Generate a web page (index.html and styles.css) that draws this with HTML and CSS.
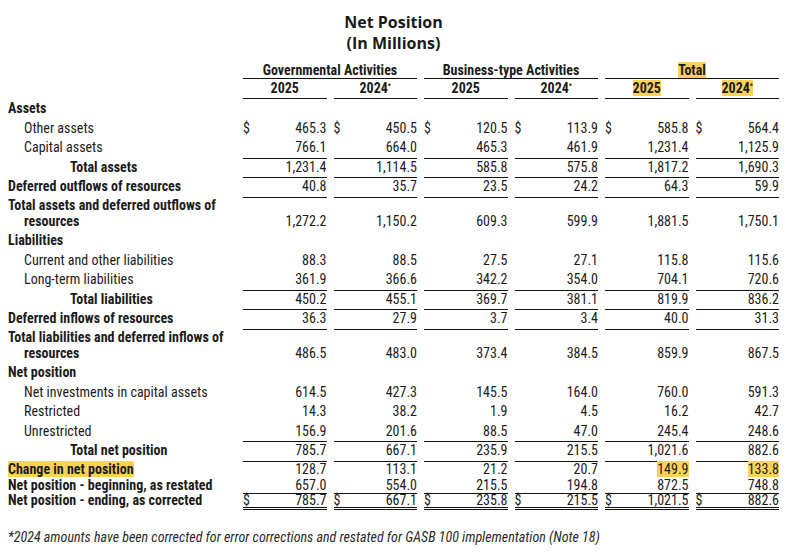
FILE: index.html
```html
<!DOCTYPE html>
<html>
<head>
<meta charset="utf-8">
<link rel="stylesheet" href="styles.css">
</head>
<body>
<div class="page">
  <h1 class="title">Net Position<br>(In Millions)</h1>
  <div class="table">
    <div class="row grp">
      <div class="lab"></div>
      <div class="gh">Governmental Activities</div>
      <div class="gh">Business-type Activities</div>
      <div class="gh"><mark>Total</mark></div>
    </div>
    <div class="row yr">
      <div class="lab"></div>
      <div class="yh">2025</div>
      <div class="yh">2024<sup>*</sup></div>
      <div class="yh">2025</div>
      <div class="yh">2024<sup>*</sup></div>
      <div class="yh"><mark>2025</mark></div>
      <div class="yh"><mark>2024<sup>*</sup></mark></div>
    </div>

    <div class="row"><div class="lab b">Assets</div></div>
    <div class="row">
      <div class="lab i1">Other assets</div>
      <div class="v d"><span>$</span><span>465.3</span></div>
      <div class="v d"><span>$</span><span>450.5</span></div>
      <div class="v d"><span>$</span><span>120.5</span></div>
      <div class="v d"><span>$</span><span>113.9</span></div>
      <div class="v d"><span>$</span><span>585.8</span></div>
      <div class="v d"><span>$</span><span>564.4</span></div>
    </div>
    <div class="row">
      <div class="lab i1">Capital assets</div>
      <div class="v u">766.1</div><div class="v u">664.0</div><div class="v u">465.3</div><div class="v u">461.9</div><div class="v u">1,231.4</div><div class="v u">1,125.9</div>
    </div>
    <div class="row">
      <div class="lab i2 b">Total assets</div>
      <div class="v u">1,231.4</div><div class="v u">1,114.5</div><div class="v u">585.8</div><div class="v u">575.8</div><div class="v u">1,817.2</div><div class="v u">1,690.3</div>
    </div>
    <div class="row">
      <div class="lab b">Deferred outflows of resources</div>
      <div class="v u">40.8</div><div class="v u">35.7</div><div class="v u">23.5</div><div class="v u">24.2</div><div class="v u">64.3</div><div class="v u">59.9</div>
    </div>
    <div class="row two">
      <div class="lab b hang">Total assets and deferred outflows of<br>resources</div>
      <div class="v">1,272.2</div><div class="v">1,150.2</div><div class="v">609.3</div><div class="v">599.9</div><div class="v">1,881.5</div><div class="v">1,750.1</div>
    </div>

    <div class="row"><div class="lab b">Liabilities</div></div>
    <div class="row">
      <div class="lab i1">Current and other liabilities</div>
      <div class="v">88.3</div><div class="v">88.5</div><div class="v">27.5</div><div class="v">27.1</div><div class="v">115.8</div><div class="v">115.6</div>
    </div>
    <div class="row">
      <div class="lab i1">Long-term liabilities</div>
      <div class="v u">361.9</div><div class="v u">366.6</div><div class="v u">342.2</div><div class="v u">354.0</div><div class="v u">704.1</div><div class="v u">720.6</div>
    </div>
    <div class="row">
      <div class="lab i2 b">Total liabilities</div>
      <div class="v u">450.2</div><div class="v u">455.1</div><div class="v u">369.7</div><div class="v u">381.1</div><div class="v u">819.9</div><div class="v u">836.2</div>
    </div>
    <div class="row">
      <div class="lab b">Deferred inflows of resources</div>
      <div class="v u">36.3</div><div class="v u">27.9</div><div class="v u">3.7</div><div class="v u">3.4</div><div class="v u">40.0</div><div class="v u">31.3</div>
    </div>
    <div class="row two">
      <div class="lab b hang">Total liabilities and deferred inflows of<br>resources</div>
      <div class="v">486.5</div><div class="v">483.0</div><div class="v">373.4</div><div class="v">384.5</div><div class="v">859.9</div><div class="v">867.5</div>
    </div>

    <div class="row"><div class="lab b">Net position</div></div>
    <div class="row">
      <div class="lab i1">Net investments in capital assets</div>
      <div class="v">614.5</div><div class="v">427.3</div><div class="v">145.5</div><div class="v">164.0</div><div class="v">760.0</div><div class="v">591.3</div>
    </div>
    <div class="row">
      <div class="lab i1">Restricted</div>
      <div class="v">14.3</div><div class="v">38.2</div><div class="v">1.9</div><div class="v">4.5</div><div class="v">16.2</div><div class="v">42.7</div>
    </div>
    <div class="row">
      <div class="lab i1">Unrestricted</div>
      <div class="v u">156.9</div><div class="v u">201.6</div><div class="v u">88.5</div><div class="v u">47.0</div><div class="v u">245.4</div><div class="v u">248.6</div>
    </div>
    <div class="row">
      <div class="lab i2 b">Total net position</div>
      <div class="v u">785.7</div><div class="v u">667.1</div><div class="v u">235.9</div><div class="v u">215.5</div><div class="v u">1,021.6</div><div class="v u">882.6</div>
    </div>
    <div class="row tight">
      <div class="lab b"><mark>Change in net position</mark></div>
      <div class="v">128.7</div><div class="v">113.1</div><div class="v">21.2</div><div class="v">20.7</div><div class="v"><mark>149.9</mark></div><div class="v"><mark>133.8</mark></div>
    </div>
    <div class="row tight">
      <div class="lab b">Net position - beginning, as restated</div>
      <div class="v u">657.0</div><div class="v u">554.0</div><div class="v u">215.5</div><div class="v u">194.8</div><div class="v u">872.5</div><div class="v u">748.8</div>
    </div>
    <div class="row last">
      <div class="lab b">Net position - ending, as corrected</div>
      <div class="v d dbl"><span>$</span><span>785.7</span></div>
      <div class="v d dbl"><span>$</span><span>667.1</span></div>
      <div class="v d dbl"><span>$</span><span>235.8</span></div>
      <div class="v d dbl"><span>$</span><span>215.5</span></div>
      <div class="v d dbl"><span>$</span><span>1,021.5</span></div>
      <div class="v d dbl"><span>$</span><span>882.6</span></div>
    </div>
  </div>
  <p class="note">*2024 amounts have been corrected for error corrections and restated for GASB 100 implementation (Note 18)</p>
</div>
</body>
</html>
```

FILE: styles.css
```css
html, body {
  margin: 0;
  padding: 0;
  background: #ffffff;
}

.page {
  padding: 12px 8px 0 8px;
  font-family: "Roboto Condensed", "Roboto", "Liberation Sans Narrow", sans-serif;
  font-stretch: condensed;
  font-size: 14px;
  color: #1b1b1b;
}

.title {
  margin: 0;
  text-align: center;
  font-family: "Open Sans", "Lato", sans-serif;
  font-stretch: normal;
  font-weight: 700;
  font-size: 16px;
  line-height: 21px;
  color: #1a1a1a;
}

mark {
  background: #fbd15e;
  color: inherit;
}

.table {
  margin-top: 8px;
}

.row {
  display: grid;
  grid-template-columns: 228px repeat(6, 90.5px);
  height: 19.5px;
  line-height: 19.5px;
  align-items: stretch;
}

.row.grp {
  height: 17px;
  line-height: 16px;
}

.row.yr {
  height: 20px;
  line-height: 19px;
}

.gh {
  grid-column: span 2;
  margin-left: 7px;
  text-align: center;
  font-weight: 700;
  border-bottom: 1px solid #111;
}

.yh {
  margin-left: 7px;
  text-align: center;
  font-weight: 700;
  border-bottom: 1px solid #111;
}

sup {
  font-size: 7px;
  line-height: 0;
  vertical-align: 5px;
}

.lab {
  white-space: nowrap;
}

.b {
  font-weight: 700;
}

.i1 {
  padding-left: 16px;
}

.i2 {
  padding-left: 62px;
}

.hang {
  white-space: normal;
  padding-left: 16px;
  text-indent: -16px;
  line-height: 16.5px;
}

.v {
  margin-left: 7px;
  text-align: right;
  box-sizing: border-box;
}

.v.u {
  border-bottom: 1px solid #111;
}

.v.d {
  display: flex;
  justify-content: space-between;
}

.row.two {
  height: 34.5px;
  align-items: end;
  padding-bottom: 1.5px;
  box-sizing: border-box;
}

.row.two .v {
  line-height: 16.5px;
}

.row.tight {
  height: 16px;
  line-height: 16px;
}

.row.last {
  height: 17px;
  line-height: 14px;
}

.v.dbl {
  border-bottom: 3px double #111;
}

.note {
  margin: 19px 0 0 0;
  font-style: italic;
  color: #2a2a2a;
  font-size: 14px;
}
```
